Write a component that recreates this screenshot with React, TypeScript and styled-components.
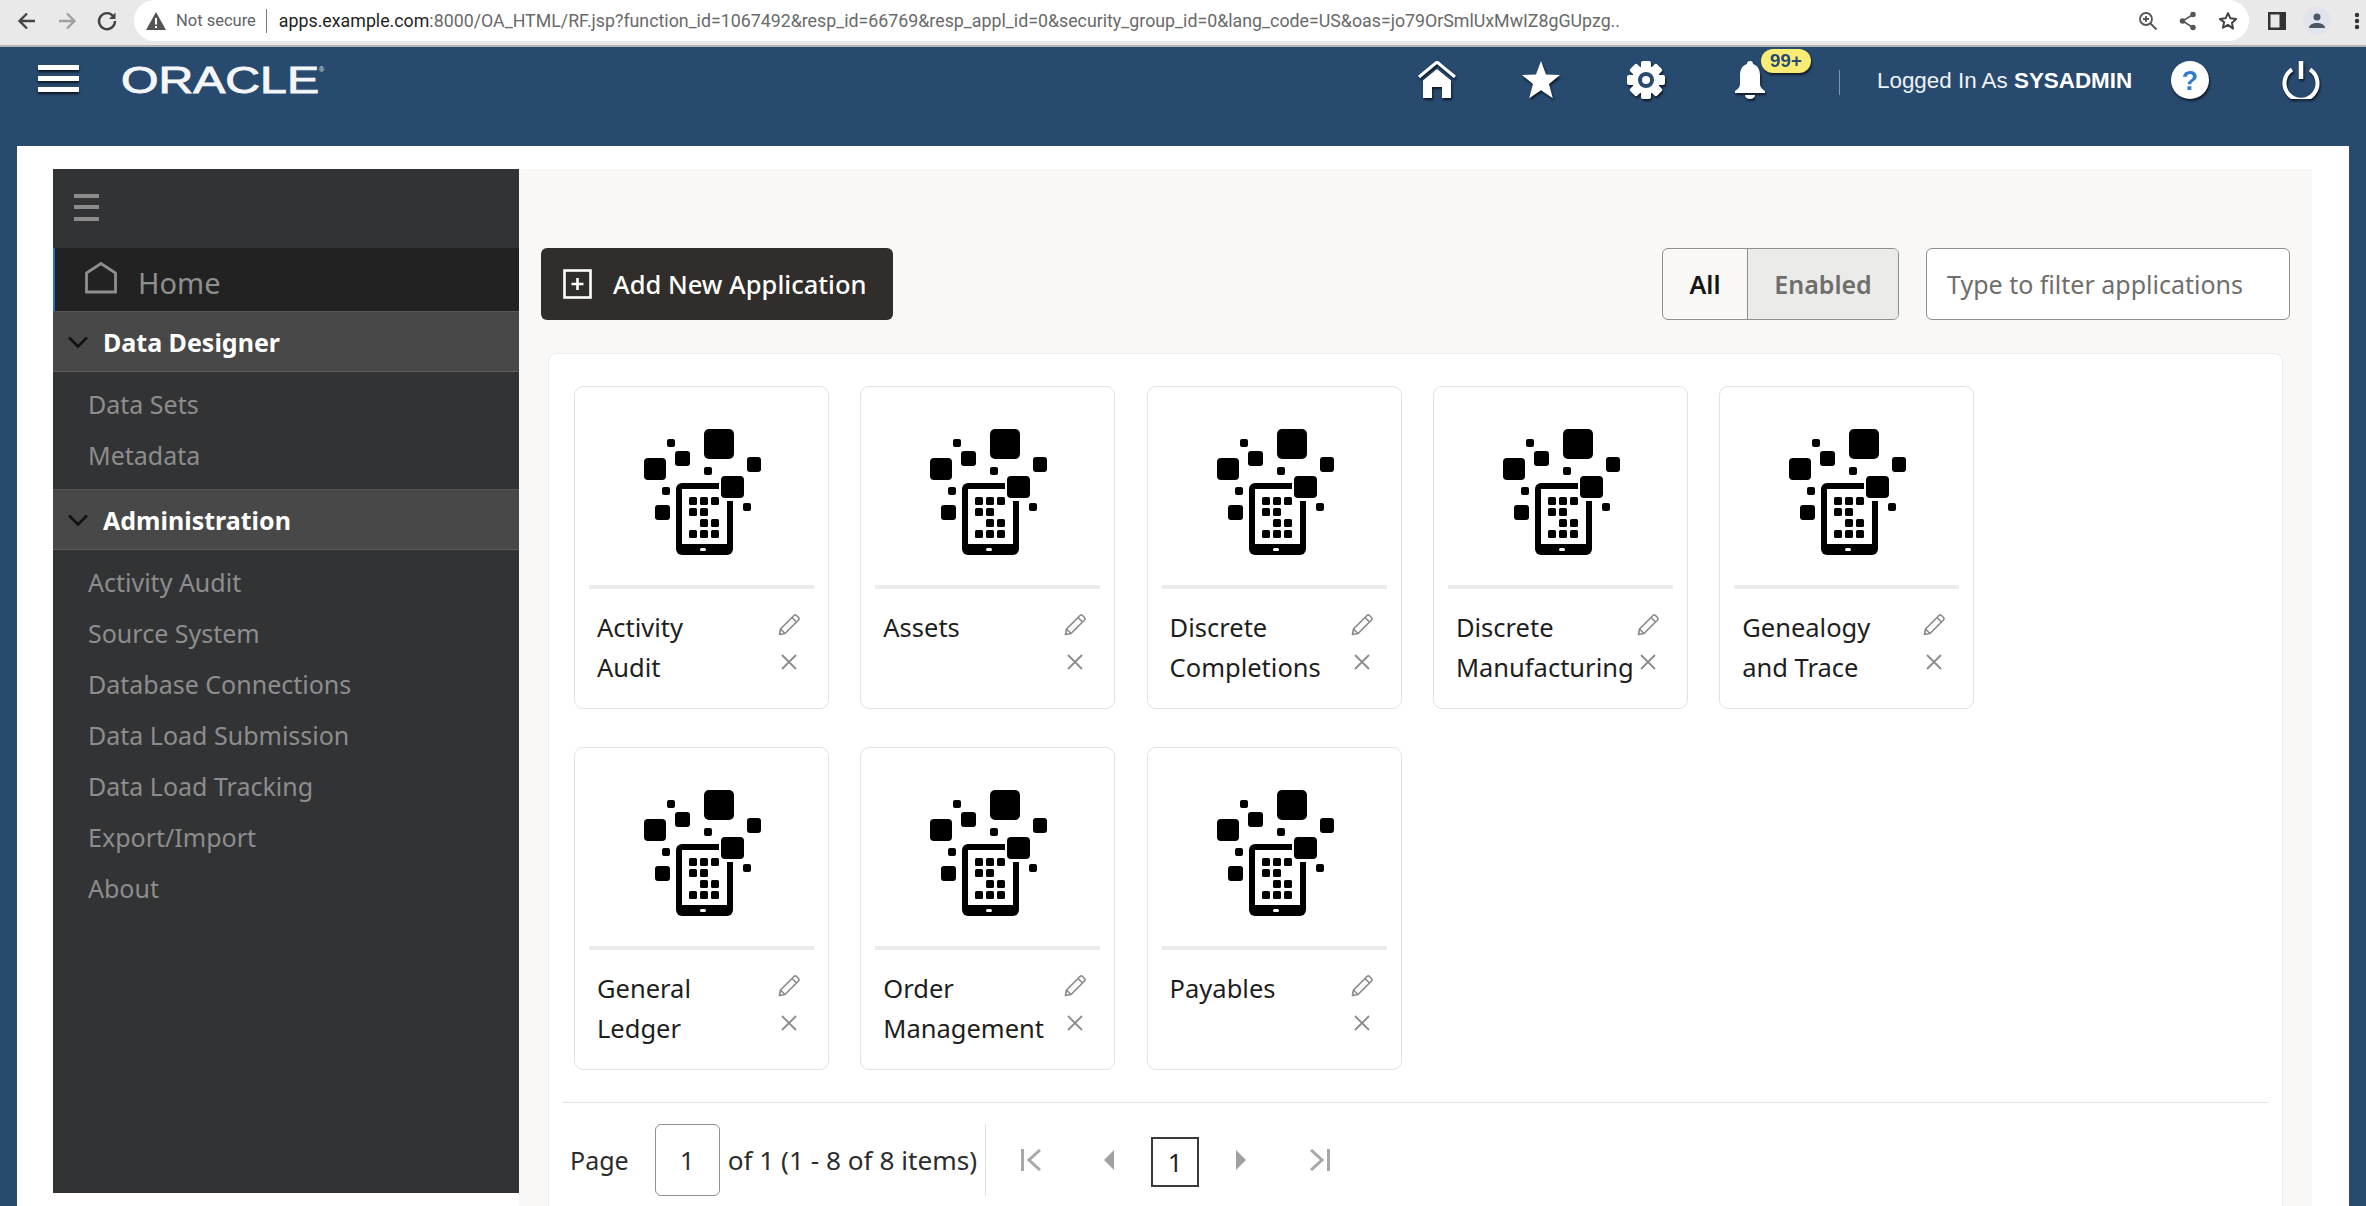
import React from "react";
import styled, { createGlobalStyle } from "styled-components";

const Global = createGlobalStyle`
  html, body { margin: 0; padding: 0; overflow: hidden; }
  * { box-sizing: border-box; }
  body { font-family: "Noto Sans", sans-serif; }
`;

const Page = styled.div`
  width: 2366px;
  height: 1206px;
  overflow: hidden;
  display: flex;
  flex-direction: column;
  background: #284a6e;
`;

/* ---------- browser chrome ---------- */
const BrowserBar = styled.div`
  height: 47px;
  flex: none;
  display: flex;
  align-items: flex-start;
  background: #e9e9e9;
  border-bottom: 2px solid #b4b4b4;
`;
const NavIcons = styled.div`
  width: 134px;
  height: 41px;
  flex: none;
  display: flex;
  align-items: center;
  padding-left: 16px;
  gap: 18px;
`;
const AddressPill = styled.div`
  width: 2115px;
  height: 41px;
  flex: none;
  background: #fff;
  border-radius: 21px;
  display: flex;
  align-items: center;
  padding: 0 11px 0 12px;
  font-family: Roboto, sans-serif;
  font-size: 17.8px;
  white-space: nowrap;
  color: #5f6368;
`;
const NotSecure = styled.span`
  margin-left: 10px;
  font-size: 16.5px;
  color: #5f6368;
`;
const PillSep = styled.span`
  width: 1px;
  height: 24px;
  background: #7b7b7b;
  margin: 0 12px 0 10px;
`;
const Url = styled.span`
  flex: 1;
  color: #6a6a6a;
`;
const UrlHost = styled.span`
  color: #1f1f1f;
`;
const PillActions = styled.div`
  display: flex;
  align-items: center;
  gap: 21px;
`;
const ChromeRight = styled.div`
  flex: 1;
  height: 41px;
  display: flex;
  align-items: center;
  padding-left: 19px;
  gap: 17px;
`;
const ProfileCircle = styled.span`
  width: 28px;
  height: 28px;
  border-radius: 50%;
  background: #e1e4ec;
  display: flex;
  align-items: center;
  justify-content: center;
`;

/* ---------- app header ---------- */
const AppHeader = styled.header`
  height: 99px;
  flex: none;
  display: flex;
  align-items: flex-start;
  padding: 14px 46px 0 38px;
  color: #fff;
`;
const HeaderLeft = styled.div`
  display: flex;
  align-items: center;
  height: 38px;
  gap: 41px;
  flex: 1;
`;
const Logo = styled.svg`
  display: block;
  flex: none;
  width: 210px;
  height: 44px;
`;
const LogoText = styled.text`
  font-family: "Liberation Sans", sans-serif;
  font-size: 36px;
  fill: #f4f6f8;
  stroke: #f4f6f8;
  stroke-width: 0.9px;
`;
const LogoMark = styled.text`
  font-family: "Liberation Sans", sans-serif;
  font-size: 7px;
  fill: #f4f6f8;
`;
const HeaderRight = styled.div`
  display: flex;
  align-items: center;
  height: 38px;
`;
const HeaderIconWrap = styled.span<{ $ml?: number }>`
  position: relative;
  display: block;
  width: 38px;
  height: 38px;
  margin-left: ${(p) => p.$ml ?? 0}px;
  filter: drop-shadow(1px 2px 1px rgba(0, 0, 0, 0.65));
`;
const Badge = styled.span`
  position: absolute;
  left: 30px;
  top: -12px;
  width: 50px;
  height: 24px;
  border-radius: 12px;
  background: #f8ec74;
  color: #284a6e;
  font: 700 19px/24px "Liberation Sans", sans-serif;
  text-align: center;
`;
const HeaderDivider = styled.span`
  width: 1px;
  height: 25px;
  margin: 4px 37px 0 70px;
  background: #7f97b0;
`;
const LoggedIn = styled.span`
  font: 400 22.4px/38px "Liberation Sans", sans-serif;
  margin-top: 2px;
  width: 254px;
  white-space: nowrap;
  color: #eef2f6;
`;
const LoggedUser = styled.b`
  font-weight: 700;
  color: #fff;
`;
const HelpMark = styled.text`
  font: 700 27px "Liberation Sans", sans-serif;
  fill: #2f7bd0;
`;

/* ---------- main ---------- */
const Main = styled.main`
  flex: 1;
  min-height: 0;
  margin: 0 17px;
  padding: 23px 37px 0 36px;
  background: #fff;
  display: flex;
  align-items: flex-start;
`;
const Sidebar = styled.nav`
  width: 466px;
  height: 1024px;
  flex: none;
  background: #323335;
`;
const SideTop = styled.div`
  height: 79px;
  display: flex;
  align-items: center;
  padding-left: 21px;
`;
const SideBars = styled.span`
  display: block;
  width: 25px;
  height: 27px;
  border-top: 4px solid #8b8b8b;
  border-bottom: 4px solid #8b8b8b;
  margin-bottom: 3px;
  background: linear-gradient(#8b8b8b, #8b8b8b) center / 100% 4px no-repeat;
`;
const HomeRow = styled.div`
  height: 63px;
  display: flex;
  align-items: flex-start;
  background: #222222;
  border-left: 2px solid #2a6cc4;
  padding: 14px 0 0 30px;
  color: #8f8f8f;
  font-size: 29px;
  line-height: 42px;
`;
const HomeLabel = styled.span`
  margin-left: 21px;
`;
const SectionHeader = styled.div`
  height: 61px;
  display: flex;
  align-items: center;
  padding-left: 15px;
  gap: 15px;
  background: #484848;
  border-top: 1px solid #565656;
  border-bottom: 1px solid #5e5e5e;
  color: #fff;
  font-weight: 700;
  font-size: 25px;
`;
const SideList = styled.ul<{ $top: number; $bottom: number }>`
  list-style: none;
  margin: 0;
  padding: ${(p) => p.$top}px 0 ${(p) => p.$bottom}px 35px;
`;
const SideItem = styled.li`
  height: 51px;
  line-height: 51px;
  font-size: 25px;
  color: #8d8d8d;
`;

const Content = styled.section`
  flex: 1;
  height: 1100px;
  background: #f9f8f6;
  padding-top: 79px;
`;
const Toolbar = styled.div`
  height: 72px;
  display: flex;
  align-items: stretch;
  padding: 0 22px;
`;
const AddButton = styled.button`
  width: 352px;
  border: 0;
  border-radius: 6px;
  background: #312d2a;
  color: #fff;
  display: flex;
  align-items: center;
  padding: 0 0 0 22px;
  gap: 21px;
  font: 500 25.5px "Noto Sans", sans-serif;
`;
const Spacer = styled.div`
  flex: 1;
`;
const Toggle = styled.div`
  width: 237px;
  display: flex;
  border: 1px solid #8f8f8f;
  border-radius: 6px;
  overflow: hidden;
  background: #f9f8f6;
`;
const ToggleOption = styled.span<{ $on?: boolean }>`
  display: flex;
  align-items: center;
  justify-content: center;
  font-size: 25px;
  font-weight: 600;
  width: ${(p) => (p.$on ? "84px" : "auto")};
  flex: ${(p) => (p.$on ? "none" : 1)};
  color: ${(p) => (p.$on ? "#161513" : "#6f6e6c")};
  background: ${(p) => (p.$on ? "transparent" : "#ebebe9")};
  border-left: ${(p) => (p.$on ? "0" : "1px solid #8f8f8f")};
`;
const FilterInput = styled.input`
  width: 364px;
  margin-left: 27px;
  border: 1px solid #8f8f8f;
  border-radius: 6px;
  background: #fff;
  padding: 0 0 0 20px;
  font: 400 25px "Noto Sans", sans-serif;
  &::placeholder {
    color: #6f6e6c;
    opacity: 1;
  }
`;
const Panel = styled.div`
  margin: 33px 29px 0 29px;
  background: #fff;
  border: 1px solid #ebebeb;
  border-radius: 8px;
  padding: 32px 14px 40px 14px;
`;
const CardGrid = styled.div`
  display: grid;
  grid-template-columns: repeat(5, 255px);
  column-gap: 31.3px;
  row-gap: 38px;
  padding-left: 11px;
`;
const Card = styled.article`
  height: 323px;
  background: #fff;
  border: 1px solid #e2e2e2;
  border-radius: 9px;
  display: flex;
  flex-direction: column;
`;
const CardIcon = styled.div`
  height: 198px;
  flex: none;
  display: flex;
  justify-content: center;
  padding: 42px 0 0 2px;
`;
const CardRule = styled.div`
  height: 4px;
  flex: none;
  margin: 0 14px;
  background: #ececec;
`;
const CardFoot = styled.div`
  display: flex;
  padding: 18px 0 0 22px;
`;
const CardTitle = styled.div`
  width: 156px;
  flex: none;
  font-size: 25.5px;
  line-height: 40px;
  color: #1e1e1e;
`;
const CardActions = styled.div`
  margin-left: 24px;
  width: 24px;
  display: flex;
  flex-direction: column;
  align-items: center;
  gap: 17px;
  margin-top: 6px;
`;
const PanelRule = styled.div`
  height: 1px;
  margin-top: 32px;
  background: #e2e2e2;
`;
const Pager = styled.div`
  display: flex;
  align-items: stretch;
  height: 72px;
  margin-top: 21px;
  padding-left: 7px;
  font-size: 25px;
  color: #2c2c2c;
`;
const PagerLabel = styled.span`
  display: flex;
  align-items: center;
`;
const PagerRange = styled(PagerLabel)`
  font-size: 26.2px;
`;
const PageInput = styled.input`
  width: 65px;
  margin: 0 8px 0 26px;
  border: 1px solid #8f8f8f;
  border-radius: 6px;
  text-align: center;
  background: #fff;
  color: #2c2c2c;
  font: 400 25px "Noto Sans", sans-serif;
  padding: 0;
`;
const PagerRule = styled.span`
  width: 1px;
  margin: 0 35px 0 8px;
  background: #e2e2e2;
`;
const PagerIcon = styled.span<{ $ml: number }>`
  margin-left: ${(p) => p.$ml}px;
  display: flex;
  align-items: center;
`;
const PageBox = styled.span`
  width: 48px;
  height: 50px;
  margin: 13px 0 0 37px;
  border: 2px solid #3a3a3a;
  display: flex;
  align-items: center;
  justify-content: center;
  color: #1e1e1e;
`;

/* ---------- drawings ---------- */
const ArrowIcon = ({ dir, c }: { dir: "l" | "r"; c: string }) => (
  <svg width="22" height="22" viewBox="0 0 22 22" fill="none" stroke={c} strokeWidth="2.4">
    {dir === "l" ? <path d="M19 11H4M11 3.5 3.5 11l7.5 7.5" /> : <path d="M3 11h15M11 3.5l7.5 7.5-7.5 7.5" />}
  </svg>
);
const ReloadIcon = () => (
  <svg width="22" height="22" viewBox="0 0 22 22" fill="none">
    <path d="M17.5 6.5A8 8 0 1 0 19 11" stroke="#444" strokeWidth="2.4" />
    <path d="M19.5 2.5V9h-6.5z" fill="#444" />
  </svg>
);
const WarnIcon = () => (
  <svg width="20" height="18" viewBox="0 0 20 18">
    <path d="M10 0 20 18H0z" fill="#555" />
    <path d="M9 6h2v6.500H9zM9 14h2v2H9z" fill="#fff" />
  </svg>
);
const ZoomIcon = () => (
  <svg width="20" height="20" viewBox="0 0 20 20" fill="none" stroke="#555" strokeWidth="1.8">
    <circle cx="8" cy="8" r="6" />
    <path d="m12.500 12.500 6 6M8 5v6M5 8h6" />
  </svg>
);
const ShareIcon = () => (
  <svg width="18" height="20" viewBox="0 0 18 20" fill="#555" stroke="#555" strokeWidth="1.5">
    <circle cx="14" cy="3.500" r="2" />
    <circle cx="3.500" cy="10" r="2" />
    <circle cx="14" cy="16.500" r="2" />
    <path d="M14 3.500 3.500 10 14 16.500" fill="none" />
  </svg>
);
const BookmarkIcon = () => (
  <svg width="20" height="20" viewBox="0 0 24 24" fill="none" stroke="#444" strokeWidth="2.400" strokeLinejoin="round">
    <path d="m12 2.500 2.900 6.300 6.900.8-5.100 4.700 1.400 6.800L12 16.700 5.900 20.100l1.400-6.800L2.200 9.600l6.900-.8z" />
  </svg>
);
const PanelIcon = () => (
  <svg width="18" height="18" viewBox="0 0 18 18">
    <path d="M0 0h18v18H0z" fill="#333" />
    <path d="M2.500 2.500h9v13h-9z" fill="#e9e9e9" />
  </svg>
);
const PersonIcon = () => (
  <svg width="16" height="16" viewBox="0 0 16 16" fill="#4d5666">
    <circle cx="8" cy="4" r="3.500" />
    <path d="M0 15c0-3.500 4-5 8-5s8 1.500 8 5z" />
  </svg>
);
const DotsIcon = () => (
  <svg width="6" height="18" viewBox="0 0 6 18" fill="#333" style={{ marginLeft: 6 }}>
    <circle cx="3" cy="3" r="2.200" />
    <circle cx="3" cy="9" r="2.200" />
    <circle cx="3" cy="15" r="2.200" />
  </svg>
);
const HeaderBurger = () => (
  <svg width="42" height="30" viewBox="0 0 42 30" fill="#fff" style={{ filter: "drop-shadow(0 2px 1px rgba(0,0,0,.7))" }}>
    <rect x="0" y="0" width="41" height="5" />
    <rect x="0" y="11" width="41" height="5" />
    <rect x="0" y="22" width="41" height="5" />
  </svg>
);
const HomeGlyph = () => (
  <svg width="38" height="38" viewBox="0 0 38 38" fill="#fff">
    <path d="M1 16 19 1l18 15" fill="none" stroke="#fff" strokeWidth="3" />
    <path d="M19 8 33 19.500V37H24V26H14V37H5V19.500z" />
  </svg>
);
const StarGlyph = () => (
  <svg width="38" height="38" viewBox="0 0 38 38" fill="#fff">
    <path d="m19 0 5 13.500 14 .6-11 8.900 3.800 14.300L19 29.300 7.200 37.300 11 23 0 14.100l14-.6z" />
  </svg>
);
const GearGlyph = () => (
  <svg width="38" height="38" viewBox="0 0 38 38">
    {[0, 45, 90, 135].map((a) => (
      <rect key={a} x="14" y="0" width="10" height="38" rx="2" fill="#fff" transform={`rotate(${a} 19 19)`} />
    ))}
    <circle cx="19" cy="19" r="14" fill="#fff" />
    <circle cx="19" cy="19" r="8" fill="#284a6e" />
    <circle cx="19" cy="19" r="4" fill="#fff" />
  </svg>
);
const BellGlyph = () => (
  <svg width="38" height="38" viewBox="0 0 38 38" fill="#fff">
    <path d="M19 0c2 0 3 1 3 3 5 1.500 7 6 7 11v9c0 3 2 5 5 7v2H4v-2c3-2 5-4 5-7v-9C9 9 11 4.500 16 3c0-2 1-3 3-3z" />
    <path d="M14 34h10c0 2-2 4-5 4s-5-2-5-4z" />
  </svg>
);
const HelpGlyph = () => (
  <svg width="38" height="38" viewBox="0 0 38 38">
    <circle cx="19" cy="19" r="19" fill="#fff" />
    <HelpMark x="19" y="29" textAnchor="middle">?</HelpMark>
  </svg>
);
const PowerGlyph = () => (
  <svg width="38" height="38" viewBox="0 0 38 38" fill="none" stroke="#fff" strokeWidth="4">
    <path d="M10 8.500a16.500 16.500 0 1 0 18 0" />
    <path d="M19 0v18" strokeWidth="4.500" />
  </svg>
);
const SideHome = () => (
  <svg width="32" height="32" viewBox="0 0 32 32" fill="none" stroke="#8f8f8f" strokeWidth="2.800">
    <path d="M1.500 30V11L16 1.500 30.500 11V30z" />
  </svg>
);
const Chevron = () => (
  <svg width="20" height="12" viewBox="0 0 20 12" fill="none" stroke="#111" strokeWidth="2.600">
    <path d="m1 1.500 9 9 9-9" />
  </svg>
);
const PlusBox = () => (
  <svg width="29" height="30" viewBox="0 0 29 30" fill="none" stroke="#fff">
    <rect x="1.500" y="1.500" width="26" height="27" strokeWidth="2.600" />
    <path d="M14.500 9v12M8.500 15h12" strokeWidth="2.600" />
  </svg>
);
const dots: [number, number][] = [
  [69, 77], [80, 77], [91, 77],
  [69, 88], [80, 88],
  [80, 99], [91, 99],
  [69, 110], [80, 110], [91, 110],
];
const squares: [number, number, number, number, number][] = [
  [84, 9, 30, 30, 5],
  [47, 19, 8, 8, 2],
  [55, 31, 15, 15, 3],
  [24, 38, 22, 22, 4],
  [127, 37, 14, 15, 3],
  [84, 47, 8, 8, 2],
  [42, 67, 8, 8, 2],
  [35, 85, 15, 15, 3],
  [123, 83, 8, 8, 2],
];
const AppGlyph = () => (
  <svg width="117" height="127" viewBox="24 9 117 127">
    {squares.map(([x, y, w, h, r]) => (
      <rect key={`${x}-${y}`} x={x} y={y} width={w} height={h} rx={r} fill="#000" />
    ))}
    <rect x="56" y="63" width="57" height="72" rx="6" fill="#000" />
    <rect x="62" y="69" width="45" height="55" fill="#fff" />
    <rect x="80" y="128" width="6" height="3" rx="1.500" fill="#fff" />
    {dots.map(([x, y]) => (
      <rect key={`${x}-${y}`} x={x} y={y} width="8" height="8" rx="1.500" fill="#000" />
    ))}
    <rect x="99" y="54" width="27" height="27" fill="#fff" />
    <rect x="101" y="56" width="23" height="22" rx="4" fill="#000" />
  </svg>
);
const Pencil = () => (
  <svg width="24" height="24" viewBox="0 0 24 24" fill="none" stroke="#8c8c8c" strokeWidth="1.700" strokeLinejoin="round">
    <path d="M2.500 21.500 3.500 16 17 2.500a1.800 1.800 0 0 1 2.500 0l2 2a1.800 1.800 0 0 1 0 2.500L8 20.500z" />
    <path d="m15 4.500 4.500 4.500M3.500 16 8 20.500" />
  </svg>
);
const Cross = () => (
  <svg width="16" height="16" viewBox="0 0 16 16" stroke="#8c8c8c" strokeWidth="1.800">
    <path d="m1 1 14 14M15 1 1 15" />
  </svg>
);
const FirstIcon = () => (
  <svg width="20" height="22" viewBox="0 0 20 22" fill="none" stroke="#a8a8a8" strokeWidth="3">
    <path d="M1.500 0v22M19 1 8 11l11 10" />
  </svg>
);
const LastIcon = () => (
  <svg width="20" height="22" viewBox="0 0 20 22" fill="none" stroke="#a8a8a8" strokeWidth="3">
    <path d="M18.500 0v22M1 1l11 10L1 21" />
  </svg>
);
const PrevIcon = () => (
  <svg width="10" height="20" viewBox="0 0 10 20" fill="#a0a0a0">
    <path d="M10 0v20L0 10z" />
  </svg>
);
const NextIcon = () => (
  <svg width="10" height="20" viewBox="0 0 10 20" fill="#a0a0a0">
    <path d="M0 0v20l10-10z" />
  </svg>
);

const apps = [
  "Activity Audit",
  "Assets",
  "Discrete Completions",
  "Discrete Manufacturing",
  "Genealogy and Trace",
  "General Ledger",
  "Order Management",
  "Payables",
];
const designerItems = ["Data Sets", "Metadata"];
const adminItems = [
  "Activity Audit",
  "Source System",
  "Database Connections",
  "Data Load Submission",
  "Data Load Tracking",
  "Export/Import",
  "About",
];

export default function App() {
  return (
    <Page>
      <Global />
      <BrowserBar>
        <NavIcons>
          <ArrowIcon dir="l" c="#444" />
          <ArrowIcon dir="r" c="#a0a0a0" />
          <ReloadIcon />
        </NavIcons>
        <AddressPill>
          <WarnIcon />
          <NotSecure>Not secure</NotSecure>
          <PillSep />
          <Url>
            <UrlHost>apps.example.com</UrlHost>
            :8000/OA_HTML/RF.jsp?function_id=1067492&amp;resp_id=66769&amp;resp_appl_id=0&amp;security_group_id=0&amp;lang_code=US&amp;oas=jo79OrSmlUxMwIZ8gGUpzg..
          </Url>
          <PillActions>
            <ZoomIcon />
            <ShareIcon />
            <BookmarkIcon />
          </PillActions>
        </AddressPill>
        <ChromeRight>
          <PanelIcon />
          <ProfileCircle>
            <PersonIcon />
          </ProfileCircle>
          <DotsIcon />
        </ChromeRight>
      </BrowserBar>

      <AppHeader>
        <HeaderLeft>
          <HeaderBurger />
          <Logo viewBox="0 0 210 44">
            <LogoText x="0" y="35" textLength="198" lengthAdjust="spacingAndGlyphs">
              ORACLE
            </LogoText>
            <LogoMark x="198" y="14">®</LogoMark>
          </Logo>
        </HeaderLeft>
        <HeaderRight>
          <HeaderIconWrap><HomeGlyph /></HeaderIconWrap>
          <HeaderIconWrap $ml={66}><StarGlyph /></HeaderIconWrap>
          <HeaderIconWrap $ml={67}><GearGlyph /></HeaderIconWrap>
          <HeaderIconWrap $ml={66}>
            <BellGlyph />
            <Badge>99+</Badge>
          </HeaderIconWrap>
          <HeaderDivider />
          <LoggedIn>
            Logged In As <LoggedUser>SYSADMIN</LoggedUser>
          </LoggedIn>
          <HeaderIconWrap $ml={40}><HelpGlyph /></HeaderIconWrap>
          <HeaderIconWrap $ml={73}><PowerGlyph /></HeaderIconWrap>
        </HeaderRight>
      </AppHeader>

      <Main>
        <Sidebar>
          <SideTop>
            <SideBars />
          </SideTop>
          <HomeRow>
            <SideHome />
            <HomeLabel>Home</HomeLabel>
          </HomeRow>
          <SectionHeader>
            <Chevron />
            Data Designer
          </SectionHeader>
          <SideList $top={7} $bottom={8}>
            {designerItems.map((t) => (
              <SideItem key={t}>{t}</SideItem>
            ))}
          </SideList>
          <SectionHeader>
            <Chevron />
            Administration
          </SectionHeader>
          <SideList $top={7} $bottom={0}>
            {adminItems.map((t) => (
              <SideItem key={t}>{t}</SideItem>
            ))}
          </SideList>
        </Sidebar>

        <Content>
          <Toolbar>
            <AddButton>
              <PlusBox />
              Add New Application
            </AddButton>
            <Spacer />
            <Toggle>
              <ToggleOption $on>All</ToggleOption>
              <ToggleOption>Enabled</ToggleOption>
            </Toggle>
            <FilterInput placeholder="Type to filter applications" />
          </Toolbar>
          <Panel>
            <CardGrid>
              {apps.map((name) => (
                <Card key={name}>
                  <CardIcon>
                    <AppGlyph />
                  </CardIcon>
                  <CardRule />
                  <CardFoot>
                    <CardTitle>{name}</CardTitle>
                    <CardActions>
                      <Pencil />
                      <Cross />
                    </CardActions>
                  </CardFoot>
                </Card>
              ))}
            </CardGrid>
            <PanelRule />
            <Pager>
              <PagerLabel>Page</PagerLabel>
              <PageInput readOnly value="1" />
              <PagerRange>of 1 (1 - 8 of 8 items)</PagerRange>
              <PagerRule />
              <PagerIcon $ml={0}><FirstIcon /></PagerIcon>
              <PagerIcon $ml={63}><PrevIcon /></PagerIcon>
              <PageBox>1</PageBox>
              <PagerIcon $ml={37}><NextIcon /></PagerIcon>
              <PagerIcon $ml={64}><LastIcon /></PagerIcon>
            </Pager>
          </Panel>
        </Content>
      </Main>
    </Page>
  );
}
